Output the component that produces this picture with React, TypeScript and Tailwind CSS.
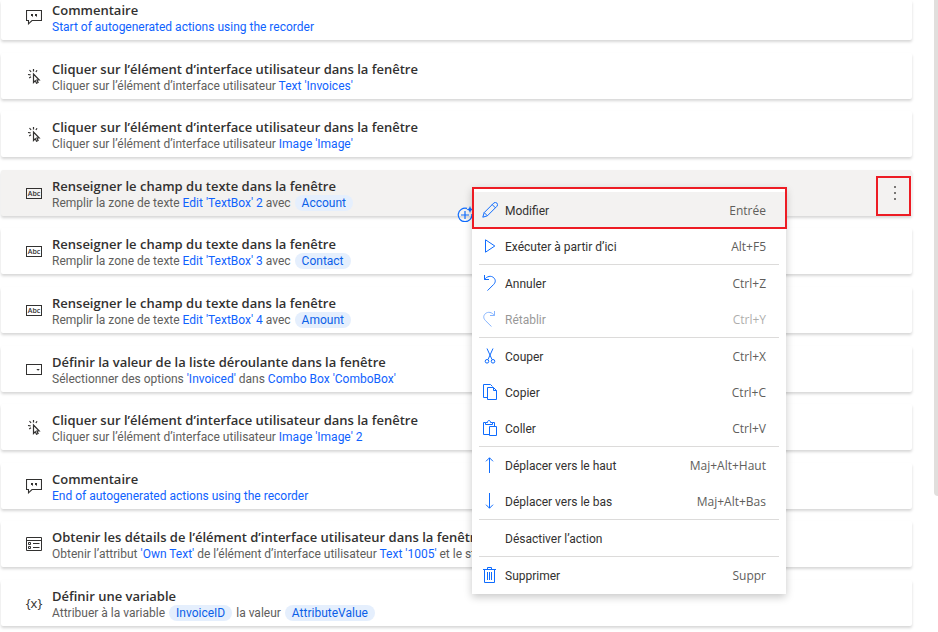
import type { ReactNode } from "react";

function Svg({ children, className = "" }: { children: ReactNode; className?: string }) {
  return (
    <svg
      viewBox="0 0 16 16"
      width="16"
      height="16"
      fill="none"
      stroke="currentColor"
      strokeWidth="1"
      className={"shrink-0 " + className}
      aria-hidden="true"
    >
      {children}
    </svg>
  );
}

const CommentIcon = () => (
  <Svg>
    <path d="M.5 1.5h15v10H6L2.5 14.8V11.5H.5z" strokeWidth="1.1" />
    <path d="M5 5h2v2l-1 1.200V7H5zM9 5h2v2l-1 1.200V7H9z" fill="currentColor" stroke="none" />
  </Svg>
);

const ClickIcon = () => (
  <Svg>
    <path d="M7.500 6v8.500l1.800-1.800 1.200 2.500 1.600-.8-1.200-2.400h2.300z" strokeWidth="1.200" />
    <path d="M7.500 1v2.500M3.500 2l1.600 2M11 2.200 9.900 4M2 6.500l2.600.4M3.200 10l1.800-1.200" strokeWidth="1.200" />
  </Svg>
);

const AbcIcon = () => (
  <Svg>
    <rect x=".5" y="3.500" width="15" height="10" />
    <text x="8" y="11" textAnchor="middle" fontSize="7" fontWeight="600" fill="currentColor" stroke="none">
      Abc
    </text>
  </Svg>
);

const ComboIcon = () => (
  <Svg>
    <rect x=".5" y="3.500" width="15" height="10" />
    <path d="M10.300 8h3.600l-1.800 1.800z" fill="currentColor" stroke="none" />
  </Svg>
);

const DetailsIcon = () => (
  <Svg>
    <path d="M.5 1.500h15v13H.5zM.5 4.500h15M2.500 6.500h2v2h-2zM2.500 10.500h2v2h-2zM7 7.500h6.500M7 11.500h6.500" />
  </Svg>
);

const VariableIcon = () => (
  <span className="flex w-4 shrink-0 justify-center text-[13px] leading-4" aria-hidden="true">{"{x}"}</span>
);

const B = ({ children }: { children: ReactNode }) => <span className="text-[#0f62fe]">{children}</span>;

const Pill = ({ children }: { children: ReactNode }) => (
  <span className="mx-1 inline-block rounded-full bg-[#e5effd] px-[7px] text-[#0b5fe8]">{children}</span>
);

const CLICK = "Cliquer sur l’élément d’interface utilisateur dans la fenêtre";
const FILL = "Renseigner le champ du texte dans la fenêtre";

const actions: { icon: ReactNode; title: string; detail: ReactNode; selected?: boolean }[] = [
  { icon: <CommentIcon />, title: "Commentaire", detail: <B>Start of autogenerated actions using the recorder</B> },
  { icon: <ClickIcon />, title: CLICK, detail: <>Cliquer sur l’élément d’interface utilisateur <B>Text 'Invoices'</B></> },
  { icon: <ClickIcon />, title: CLICK, detail: <>Cliquer sur l’élément d’interface utilisateur <B>Image 'Image'</B></> },
  { icon: <AbcIcon />, title: FILL, detail: <>Remplir la zone de texte <B>Edit 'TextBox' 2</B> avec<Pill>Account</Pill></>, selected: true },
  { icon: <AbcIcon />, title: FILL, detail: <>Remplir la zone de texte <B>Edit 'TextBox' 3</B> avec<Pill>Contact</Pill></> },
  { icon: <AbcIcon />, title: FILL, detail: <>Remplir la zone de texte <B>Edit 'TextBox' 4</B> avec<Pill>Amount</Pill></> },
  {
    icon: <ComboIcon />,
    title: "Définir la valeur de la liste déroulante dans la fenêtre",
    detail: <>Sélectionner des options <B>'Invoiced'</B> dans <B>Combo Box 'ComboBox'</B></>,
  },
  { icon: <ClickIcon />, title: CLICK, detail: <>Cliquer sur l’élément d’interface utilisateur <B>Image 'Image' 2</B></> },
  { icon: <CommentIcon />, title: "Commentaire", detail: <B>End of autogenerated actions using the recorder</B> },
  {
    icon: <DetailsIcon />,
    title: "Obtenir les détails de l’élément d’interface utilisateur dans la fenêtre",
    detail: <>Obtenir l’attribut <B>'Own Text'</B> de l’élément d’interface utilisateur <B>Text '1005'</B> et le stocker</>,
  },
  {
    icon: <VariableIcon />,
    title: "Définir une variable",
    detail: <>Attribuer à la variable<Pill>InvoiceID</Pill>la valeur<Pill>AttributeValue</Pill></>,
  },
];

type Entry = { label: string; keys?: string; icon?: ReactNode; state?: "active" | "disabled" };

const groups: Entry[][] = [
  [
    { label: "Modifier", keys: "Entrée", state: "active", icon: <path d="M.8 15.2l1.4-4.600L11.700 1.100a1.900 1.900 0 0 1 3.200 3.200L5.400 13.800zM10.200 2.600l3.200 3.200M2.200 10.600l3.200 3.200" /> },
    { label: "Exécuter à partir d’ici", keys: "Alt+F5", icon: <path d="M3.500 1.800v12.400L12.800 8z" /> },
  ],
  [
    { label: "Annuler", keys: "Ctrl+Z", icon: <path d="M2.500 0v4.500H7M2.500 4.500C5 1.200 9 .2 11.800 2.800c2.200 2.200 1.700 4.800-.2 6.700L5.500 15.600" /> },
    { label: "Rétablir", keys: "Ctrl+Y", state: "disabled", icon: <path d="M12.500 0v4.500H8M12.500 4.500C10 1.200 6 .2 3.200 2.800 1 5 1.500 7.600 3.400 9.500l6.100 6.100" /> },
  ],
  [
    { label: "Couper", keys: "Ctrl+X", icon: <><path d="M5 .5l5 11M11 .5l-5 11" /><circle cx="5" cy="13.300" r="1.800" /><circle cx="11" cy="13.300" r="1.800" /></> },
    { label: "Copier", keys: "Ctrl+C", icon: <path d="M5.500 13.500h-4v-13h7l2 2M5.500 3.500h6l3 3v9h-9zM11.500 3.500v3h3" /> },
    { label: "Coller", keys: "Ctrl+V", icon: <path d="M7 14.500H1.500v-12h2M10.500 2.500h2V6M3.500 4.500v-2h2C5.500 1.200 6 .5 7 .5s1.500.7 1.500 2h2v2zM7.500 6.500h7v9h-7z" /> },
  ],
  [
    { label: "Déplacer vers le haut", keys: "Maj+Alt+Haut", icon: <path d="M7.500 16V.8M4 4.300 7.500.8 11 4.300" /> },
    { label: "Déplacer vers le bas", keys: "Maj+Alt+Bas", icon: <path d="M7.500 0v15.200M4 11.700l3.500 3.500 3.500-3.500" /> },
  ],
  [{ label: "Désactiver l’action" }],
  [
    { label: "Supprimer", keys: "Suppr", icon: <path d="M1 2.500h13M5.500 2.500v-2h4v2M2.500 2.500v13h10v-13M5.500 5v8M7.500 5v8M9.500 5v8" /> },
  ],
];

const stateClass = { active: "bg-[#f3f2f1]", disabled: "opacity-50", normal: "" };

function ContextMenu() {
  return (
    <div
      role="menu"
      className="absolute left-[472px] top-[187px] w-[314px] bg-white pb-px pt-[5px] shadow-[0_3px_8px_rgba(0,0,0,0.22)]"
    >
      {groups.map((group, g) => (
        <div key={g} role="group">
          {g > 0 && <hr className="mx-[7px] border-[#dcdbda]" />}
          {group.map((item) => (
            <button
              key={item.label}
              type="button"
              role="menuitem"
              disabled={item.state === "disabled"}
              className={
                "flex h-9 w-full items-center gap-[7px] pl-[10px] pr-5 text-left text-[12px] leading-4 text-[#323130] " +
                stateClass[item.state ?? "normal"]
              }
            >
              <span className="size-4 shrink-0 text-[#0f6cfe]">{item.icon && <Svg>{item.icon}</Svg>}</span>
              <span className="grow pt-0.5 font-[Roboto,sans-serif]">{item.label}</span>
              <span className="pt-0.5 text-[#605e5c]">{item.keys}</span>
            </button>
          ))}
        </div>
      ))}
      <span className="pointer-events-none absolute -right-px left-0 top-0 h-[42px] border-2 border-[#ed1c24]" />
    </div>
  );
}

export default function App() {
  return (
    <div className="relative flex min-h-screen overflow-hidden bg-white font-['Open_Sans','Noto_Sans',sans-serif]">
      <ul className="flex grow flex-col justify-between pb-[6px] pl-px">
        {actions.map((action, i) => (
          <li
            key={i}
            className={
              "flex gap-[10px] rounded-[2px] pl-[25px] shadow-[0_2px_3px_rgba(0,0,0,0.16)] " +
              (i === 0 ? "h-10 items-end pb-[5px] " : "h-[46px] items-start pt-[7px] ") +
              (action.selected ? "bg-[#f3f2f1]" : "bg-white")
            }
          >
            <span className="flex h-[34px] items-center pb-0.5 text-[#323130]">{action.icon}</span>
            <div className="min-w-0 grow whitespace-nowrap">
              <h2 className="text-[13px] font-semibold leading-[18px] text-[#323130]">{action.title}</h2>
              <p className="font-[Roboto,sans-serif] text-[12px] leading-4 text-[#605e5c]">{action.detail}</p>
            </div>
            {action.selected && (
              <button
                type="button"
                aria-label="Plus d’actions"
                className="mr-px flex h-10 w-[35px] shrink-0 flex-col items-center gap-1 self-end border-2 border-[#ed1c24] pl-0.5 pt-2"
              >
                <span className="size-[2px] bg-[#797775]" />
                <span className="size-[2px] bg-[#797775]" />
                <span className="size-[2px] bg-[#797775]" />
              </button>
            )}
          </li>
        ))}
      </ul>
      <div className="ml-[22px] h-[496px] w-1 shrink-0 rounded-bl bg-[#e1dfdd]" />
      <button type="button" aria-label="Ajouter une action" className="absolute left-[457px] top-[206px] text-[#0f6cfe]">
        <Svg>
          <path d="M10 2.400A6.800 6.800 0 1 0 14.800 8M8 5v8M4 9h8" strokeWidth="1.200" />
          <path d="M13 0l1 2.500 2.500 1-2.500 1-1 2.500-1-2.500-2.500-1 2.500-1z" fill="currentColor" stroke="none" />
        </Svg>
      </button>
      <ContextMenu />
    </div>
  );
}
